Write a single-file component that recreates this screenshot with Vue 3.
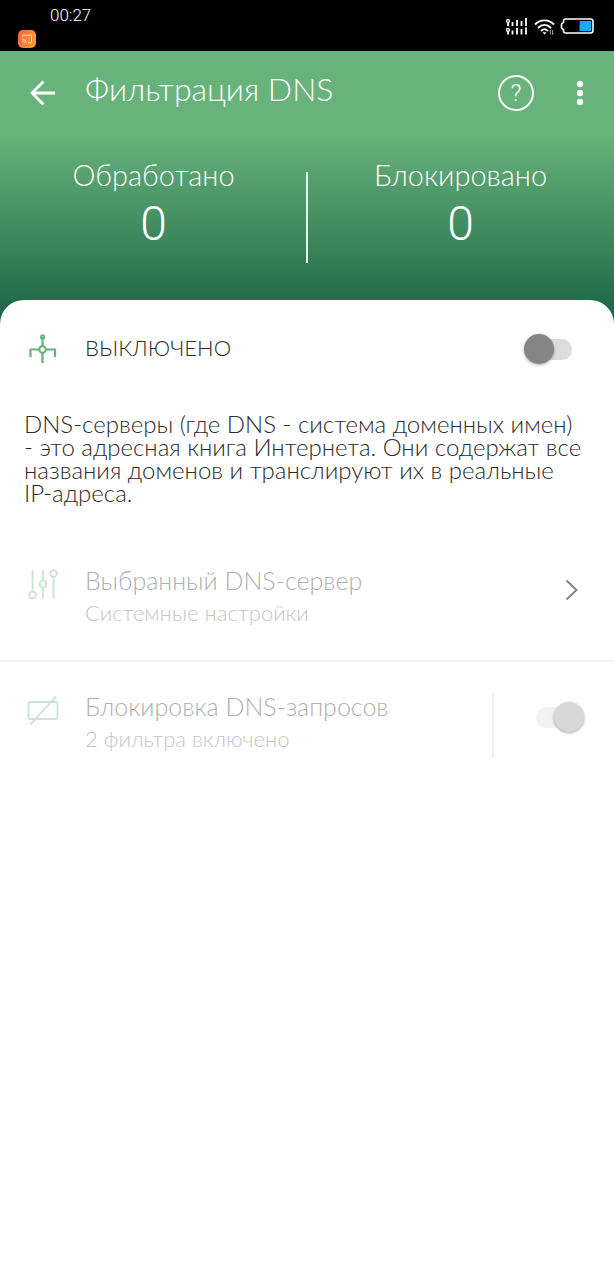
<script setup>
import { ref } from 'vue'

const protectionOn = ref(false)
const blockingOn = ref(true)

const stats = [
  { label: 'Обработано', value: 0 },
  { label: 'Блокировано', value: 0 },
]
</script>

<template>
  <div class="screen">
    <div class="status">
      <div class="status-left">
        <time class="clock">00:27</time>
        <svg class="cast" viewBox="0 0 18 18" aria-hidden="true">
          <defs>
            <linearGradient id="castFill" x1="0" y1="0" x2="1" y2="0.3">
              <stop offset="0" stop-color="#f9603f" />
              <stop offset="1" stop-color="#ff9a2e" />
            </linearGradient>
          </defs>
          <rect width="18" height="18" rx="5" fill="url(#castFill)" />
          <path d="M4.500 7.500V6q0-.8.8-.8h7.400q.8 0 .8.8v5.900q0 .8-.8.8H10M4.500 9.200a3.600 3.600 0 0 1 3.600 3.600M4.500 11a1.800 1.800 0 0 1 1.800 1.800" fill="none" stroke="#ffe3d0" stroke-width="0.900" />
        </svg>
      </div>
      <div class="status-right">
        <svg class="signal" viewBox="0 0 24 18" aria-hidden="true">
          <g fill="none" stroke="#fff" stroke-width="1.800">
            <circle cx="2" cy="3" r="1.500" stroke-width="1.300" />
            <path d="M2 4.500V8M6.500 4V8M11 2V8M15.500 3V8M20 0V8" />
            <circle cx="2" cy="12" r="1.500" stroke-width="1.300" />
            <path d="M2 13.500V16.500M6.500 12.500V16.500M11 10V16.500M15.500 11V16.500M20 9.500V16.500" />
          </g>
        </svg>
        <svg class="wifi" viewBox="0 0 22 18" aria-hidden="true">
          <g fill="none" stroke="#fff" stroke-width="1.900">
            <path d="M1 6.500C6.500 1 14.500 1 20 6.500" />
            <path d="M4 10C8.200 5.800 12.800 5.800 17 10" />
            <path d="M7 13C9.200 10.800 11.800 10.800 14 13" />
          </g>
          <path d="M8.500 14.200h4l-2 2.300z" fill="#fff" />
          <path d="M16.500 12v4.500M16.500 12l-1.200 1.500M18.500 12v4.500M18.500 16.500l1.200-1.500" fill="none" stroke="#999" stroke-width="0.900" />
        </svg>
        <svg class="battery" viewBox="0 0 34 16" aria-hidden="true">
          <path d="M5.500 1H30.500q2.500 0 2.500 2.500v9q0 2.500-2.500 2.500H5.500Q3.500 15 3.500 12.500V11.500Q1.500 11 1.500 9.500V6.500Q1.500 5 3.500 4.500V3.500Q3.500 1 5.500 1z" fill="none" stroke="#fff" stroke-width="1.600" />
          <path d="M20 3H31V13H19.500V8z" fill="#0aaeff" />
        </svg>
      </div>
    </div>

    <header class="hero">
      <div class="toolbar">
        <button class="icon-btn" type="button" aria-label="Назад">
          <svg class="i-back" viewBox="0 0 26 26" aria-hidden="true">
            <path d="M25 13H2.500M13.500 1.500L2 13l11.500 11.500" fill="none" stroke="#fff" stroke-width="2.800" />
          </svg>
        </button>
        <h1 class="title">Фильтрация DNS</h1>
        <button class="help" type="button" aria-label="Справка">?</button>
        <button class="icon-btn more" type="button" aria-label="Меню">
          <svg class="i-more" viewBox="0 0 8 26" aria-hidden="true">
            <g fill="#fff">
              <circle cx="4" cy="4" r="3.200" />
              <circle cx="4" cy="13" r="3.200" />
              <circle cx="4" cy="22" r="3.200" />
            </g>
          </svg>
        </button>
      </div>
      <div class="stats">
        <div v-for="s in stats" :key="s.label" class="stat">
          <span class="stat-label">{{ s.label }}</span>
          <span class="stat-value">{{ s.value }}</span>
        </div>
      </div>
    </header>

    <main class="sheet">
      <label class="row main-row">
        <svg class="row-icon" viewBox="0 0 32 32" aria-hidden="true">
          <g fill="none" stroke="#66b27a" stroke-width="2.200">
            <path d="M15.500 4V12M15.500 19V30M3.500 24V16.500H12M19 16.500H28V24" />
            <circle cx="15.500" cy="16.500" r="3.300" />
            <circle cx="15.500" cy="4" r="1.700" stroke-width="1.900" />
          </g>
        </svg>
        <span class="row-title">ВЫКЛЮЧЕНО</span>
        <input v-model="protectionOn" class="switch" type="checkbox" />
      </label>

      <p class="about">
        DNS-серверы (где DNS - система доменных имен)<br />
        - это адресная книга Интернета. Они содержат все<br />
        названия доменов и транслируют их в реальные<br />
        IP-адреса.
      </p>

      <button class="row item" type="button">
        <svg class="row-icon faded" viewBox="0 0 32 32" aria-hidden="true">
          <g fill="none" stroke="#66b27a" stroke-width="1.800">
            <path d="M5.500 2V24M16 2V12.500M16 19.500V31M26.500 9V31" />
            <circle cx="5.500" cy="27" r="3.300" />
            <circle cx="16" cy="16" r="3.300" />
            <circle cx="26.500" cy="5.500" r="3.300" />
          </g>
        </svg>
        <span class="texts">
          <span class="item-title">Выбранный DNS-сервер</span>
          <span class="item-sub">Системные настройки</span>
        </span>
        <svg class="chevron" viewBox="0 0 14 22" aria-hidden="true">
          <path d="M1.500 1.500L11.500 11l-10 9.500" fill="none" stroke="#858585" stroke-width="2" />
        </svg>
      </button>

      <label class="row item">
        <svg class="row-icon faded" viewBox="0 0 32 32" aria-hidden="true">
          <g fill="none" stroke="#66b27a" stroke-width="1.800">
            <rect x="1.500" y="8" width="29" height="17" rx="1.500" />
            <path d="M3.500 30.500L29 2.500" />
          </g>
        </svg>
        <span class="texts">
          <span class="item-title">Блокировка DNS-запросов</span>
          <span class="item-sub">2 фильтра включено</span>
        </span>
        <span class="bar"></span>
        <input v-model="blockingOn" class="switch muted" type="checkbox" />
      </label>
    </main>
  </div>
</template>

<style>
body {
  background: #fff;
}
</style>

<style scoped>
.screen {
  min-height: 100vh;
  background: #fff;
  color: #2c2c2c;
  font-family: Lato, "Open Sans", sans-serif;
  font-weight: 300;
}
button {
  margin: 0;
  padding: 0;
  border: 0;
  background: none;
  color: inherit;
  font: inherit;
  text-align: left;
}
svg {
  display: block;
  flex: none;
}
.status {
  display: flex;
  justify-content: space-between;
  height: 51px;
  background: #000;
  color: #fff;
}
.status-left {
  padding: 4px 0 0 18px;
}
.clock {
  display: block;
  margin-left: 32px;
  font-family: Roboto, sans-serif;
  font-size: 17px;
  line-height: 22px;
}
.cast {
  width: 18px;
  height: 18px;
  margin-top: 4px;
}
.status-right {
  display: flex;
  align-items: flex-start;
  gap: 4px;
  padding: 18px 20px 0 0;
}
.signal {
  width: 24px;
  height: 18px;
}
.wifi {
  width: 22px;
  height: 18px;
}
.battery {
  width: 34px;
  height: 16px;
}
.hero {
  padding-bottom: 69px;
  background: linear-gradient(#68b27b 0, #68b27b 84px, #236e4a 248px, #1a6444 274px);
  color: #fff;
}
.toolbar {
  display: flex;
  align-items: center;
  height: 84px;
  padding: 0 24px 0 30px;
}
.icon-btn {
  display: flex;
  justify-content: center;
  width: 26px;
}
.i-back {
  width: 26px;
  height: 26px;
}
.title {
  flex: 1;
  margin: 0 0 8px 29px;
  font-size: 32px;
  line-height: 40px;
  font-weight: 300;
}
.help {
  width: 36px;
  height: 36px;
  border: 2px solid #fff;
  border-radius: 50%;
  font-family: Roboto, sans-serif;
  font-size: 24px;
  line-height: 32px;
  text-align: center;
}
.more {
  width: 20px;
  margin-left: 36px;
}
.i-more {
  width: 8px;
  height: 26px;
}
.stats {
  position: relative;
  display: grid;
  grid-template-columns: 1fr 1fr;
  padding-top: 24px;
}
.stat {
  display: flex;
  flex-direction: column;
  align-items: center;
}
.stat-label {
  font-size: 29px;
  line-height: 32px;
}
.stat-value {
  font-family: Roboto, sans-serif;
  font-size: 48px;
  line-height: 66px;
}
.stats::after {
  content: "";
  position: absolute;
  left: 50%;
  top: 37px;
  width: 2px;
  height: 91px;
  margin-left: -1px;
  background: #e8f6ec;
}
.sheet {
  margin-top: -26px;
  border-radius: 24px 24px 0 0;
  background: #fff;
}
.row {
  display: flex;
  box-sizing: border-box;
  width: 100%;
  padding: 0 24px 0 27px;
}
.row-icon {
  width: 32px;
  height: 32px;
  margin-right: 26px;
}
.faded {
  opacity: 0.35;
}
.main-row {
  align-items: center;
  height: 98px;
  padding-right: 42px;
}
.row-title {
  flex: 1;
  padding-bottom: 3px;
  font-size: 22px;
  line-height: 28px;
}
.about {
  margin: 0;
  padding: 14px 24px 0;
  font-size: 24px;
  line-height: 23px;
  white-space: nowrap;
}
.item {
  height: 126px;
  padding-top: 32px;
}
button.item {
  height: 158px;
  padding-top: 64px;
  border-bottom: 2px solid #f2f2f2;
}
.texts {
  display: flex;
  flex: 1;
  flex-direction: column;
  justify-content: flex-start;
  gap: 6px;
}
.item-title {
  font-size: 25px;
  line-height: 24px;
  color: #b0b0b0;
}
.item-sub {
  font-size: 22px;
  line-height: 30px;
  color: #c6c6c6;
}
.chevron {
  width: 14px;
  height: 22px;
  margin: 11px 11px 0 0;
}
.bar {
  width: 2px;
  height: 64px;
  margin-right: 42px;
  background: #f0f0f0;
}
.switch {
  position: relative;
  flex: none;
  width: 48px;
  height: 32px;
  margin: 0;
  appearance: none;
}
.switch::before {
  content: "";
  position: absolute;
  inset: 6px 0 5px 6px;
  border-radius: 11px;
  background: #dcdcdc;
}
.switch::after {
  content: "";
  position: absolute;
  left: 0;
  top: 1px;
  width: 30px;
  height: 30px;
  border-radius: 50%;
  background: #858585;
  box-shadow: 0 1px 3px rgba(0, 0, 0, 0.35);
}
.switch:checked::before {
  inset: 6px 6px 5px 0;
}
.switch:checked::after {
  left: 18px;
}
.muted {
  margin-top: 7px;
  margin-right: 6px;
}
.muted::before {
  background: #f2f2f2;
}
.muted::after {
  background: #d8d8d8;
}
</style>
